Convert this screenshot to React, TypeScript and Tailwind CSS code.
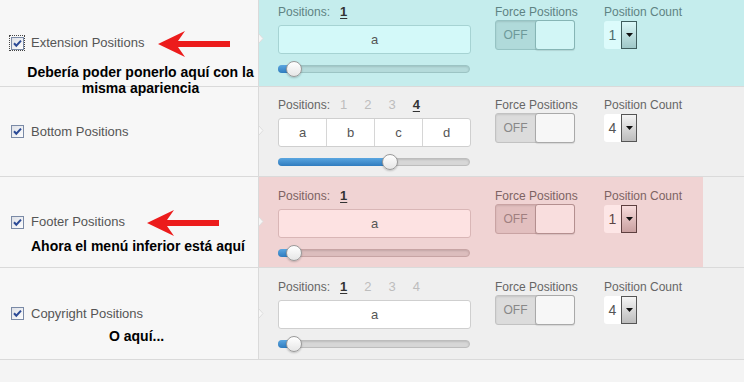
import type { ReactNode } from "react";

type Tone = "teal" | "pink" | "plain";

const tones: Record<
  Tone,
  {
    label: string;
    input: string;
    cell: string;
    track: string;
    off: string;
    knob: string;
    toggle: string;
    num: string;
    btn: string;
  }
> = {
  teal: {
    label: "text-[#5f8383]",
    input: "bg-[#d3f9f9] border-[#a6d3d3]",
    cell: "border-[#a6d3d3]",
    track: "bg-[#b5dbdb] border-[#9cc4c4]",
    off: "bg-[#b0dada] text-[#6d9999]",
    knob: "bg-[#d2f6f6] border-[#86b5b5]",
    toggle: "border-[#96c3c3]",
    num: "bg-[#dcfbfb] text-[#4f6d6d]",
    btn: "border-[#3f5d5d] from-[#dcf8f8] to-[#9fc8c8]",
  },
  pink: {
    label: "text-[#7d6363]",
    input: "bg-[#fde2e2] border-[#d9b6b6]",
    cell: "border-[#d9b6b6]",
    track: "bg-[#dcbdbd] border-[#c7a4a4]",
    off: "bg-[#e2bfbf] text-[#a07f7f]",
    knob: "bg-[#f9dede] border-[#b48f8f]",
    toggle: "border-[#c9a3a3]",
    num: "bg-[#fde6e6] text-[#5d4545]",
    btn: "border-[#5d3f3f] from-[#f8dcdc] to-[#c9a0a0]",
  },
  plain: {
    label: "text-[#666]",
    input: "bg-white border-[#cfcfcf]",
    cell: "border-[#d6d6d6]",
    track: "bg-[#d7d7d7] border-[#bdbdbd]",
    off: "bg-[#dcdcdc] text-[#888]",
    knob: "bg-[#f7f7f7] border-[#a9a9a9]",
    toggle: "border-[#c2c2c2]",
    num: "bg-white text-[#555]",
    btn: "border-[#555] from-[#f5f5f5] to-[#bcbcbc]",
  },
};

const Checkbox = ({ focused }: { focused?: boolean }) => (
  <span className={`flex h-[14px] w-[14px] items-center justify-center ${focused ? "outline-1 outline-dotted outline-[#444]" : ""}`}>
    <svg width="13" height="13" viewBox="0 0 13 13">
      <defs>
        <linearGradient id="cbg" x1="0" y1="0" x2="1" y2="1">
          <stop offset="0" stopColor="#dcdfe6" />
          <stop offset="1" stopColor="#ffffff" />
        </linearGradient>
      </defs>
      <rect x="0.5" y="0.5" width="12" height="12" fill="url(#cbg)" stroke="#7a8aa6" />
      <path d="M3 6.2 L5.3 8.7 L10 3.6" fill="none" stroke="#2b4a96" strokeWidth="2" />
    </svg>
  </span>
);

const Arrow = () => (
  <svg width="72" height="28" viewBox="0 0 72 28">
    <path d="M0 14 L27 1 L20 11 L72 11 L72 17 L20 17 L27 27 Z" fill="#ec1c1c" />
  </svg>
);

const Slider = ({ tone, pos }: { tone: Tone; pos: number }) => {
  const t = tones[tone];
  return (
    <div className="relative mt-[7px] h-[16px] w-[192px]">
      <div className={`absolute left-0 right-0 top-[4px] h-[8px] rounded-full border ${t.track} shadow-[inset_0_1px_2px_rgba(0,0,0,0.12)]`} />
      <div
        className="absolute left-0 top-[4px] h-[8px] rounded-l-full bg-linear-to-b from-[#5aa6e0] to-[#2f7cbf]"
        style={{ width: pos }}
      />
      <div
        className="absolute top-0 h-[16px] w-[16px] rounded-full border border-[#9a9a9a] bg-linear-to-b from-white to-[#e6e6e6] shadow-[0_1px_2px_rgba(0,0,0,0.2)]"
        style={{ left: pos - 8 }}
      />
    </div>
  );
};

interface RowProps {
  tone: Tone;
  label: string;
  focused?: boolean;
  height: string;
  pad: string;
  nums: number[];
  active: number;
  cells: string[];
  pos: number;
  count: string;
  panelWidth: string;
  notch: string;
  note?: ReactNode;
}

const Row = ({ tone, label, focused, height, pad, nums, active, cells, pos, count, panelWidth, notch, note }: RowProps) => {
  const t = tones[tone];
  const panelBg = tone === "teal" ? "bg-[#c5eded]" : tone === "pink" ? "bg-[#f0d3d3]" : "";
  return (
    <div className={`flex ${height} border-b border-[#dadada]`}>
      <div className="relative flex w-[259px] shrink-0 items-center gap-[7px] border-r border-[#dadada] bg-[#f7f7f7] pl-[10px]">
        <Checkbox focused={focused} />
        <span className="text-[13px] text-[#555]">{label}</span>
        {note}
      </div>
      <div className="relative flex flex-1 bg-[#efefef]">
        <svg className={`absolute left-0 ${notch}`} width="5" height="9" viewBox="0 0 5 9">
          <path d="M0 0 L4 4.5 L0 9" fill="#f7f7f7" stroke="#dddddd" />
        </svg>
        <div className={`flex ${panelWidth} gap-6 pl-[19px] ${pad} ${panelBg}`}>
          <div className="flex w-[193px] flex-col">
            <div className={`flex h-[14px] items-center text-[12px] leading-[14px] ${t.label}`}>
              <span>Positions:</span>
              <span className="ml-[10px] flex gap-[17px] text-[13px]">
                {nums.map((n) =>
                  n === active ? (
                    <span key={n} className="font-bold text-[#333] underline underline-offset-2">
                      {n}
                    </span>
                  ) : (
                    <span key={n} className="text-[#bdbdbd]">
                      {n}
                    </span>
                  ),
                )}
              </span>
            </div>
            <div className={`mt-[6px] flex h-[29px] rounded-[3px] border ${t.input}`}>
              {cells.map((c, i) => (
                <div
                  key={c}
                  className={`flex flex-1 items-center justify-center text-[13px] text-[#555] ${i > 0 ? `border-l ${t.cell}` : ""}`}
                >
                  {c}
                </div>
              ))}
            </div>
            <Slider tone={tone} pos={pos} />
          </div>
          <div className="flex w-[85px] flex-col">
            <div className={`h-[14px] text-[12px] leading-[14px] ${t.label}`}>Force Positions</div>
            <div className={`mt-px flex h-[30px] w-[80px] rounded-[3px] border ${t.toggle} ${t.off} shadow-[inset_0_1px_2px_rgba(0,0,0,0.1)]`}>
              <div className="flex w-[39px] items-center justify-center text-[12px]">OFF</div>
              <div className={`-my-px -mr-px flex-1 rounded-[3px] border ${t.knob} shadow-[0_1px_1px_rgba(0,0,0,0.1)]`} />
            </div>
          </div>
          <div className="flex flex-col">
            <div className={`h-[14px] text-[12px] leading-[14px] ${t.label}`}>Position Count</div>
            <div className="mt-[2px] flex h-[28px] w-[33px]">
              <div className={`flex w-[17px] items-center justify-center rounded-l-[3px] text-[14px] ${t.num}`}>{count}</div>
              <div className={`flex flex-1 items-center justify-center border bg-linear-to-b ${t.btn}`}>
                <svg width="7" height="4" viewBox="0 0 7 4">
                  <path d="M0 0 L7 0 L3.5 4 Z" fill="#111" />
                </svg>
              </div>
            </div>
          </div>
        </div>
      </div>
    </div>
  );
};

export default function App() {
  return (
    <div className="h-[382px] w-[744px] overflow-hidden bg-[#f4f4f4] font-['Liberation_Sans',Arial,sans-serif]">
      <Row
        tone="teal"
        label="Extension Positions"
        focused
        height="h-[87px]"
        pad="pt-[5px]"
        nums={[1]}
        active={1}
        cells={["a"]}
        pos={16}
        count="1"
        panelWidth="flex-1"
        notch="top-[34px]"
        note={
          <>
            <div className="absolute left-[158px] top-[30px]">
              <Arrow />
            </div>
            <div className="absolute left-[18px] top-[64px] z-10 w-[245px] text-center text-[14px] font-bold leading-[16px] text-black">
              Debería poder ponerlo aquí con la misma apariencia
            </div>
          </>
        }
      />
      <Row
        tone="plain"
        label="Bottom Positions"
        height="h-[90px]"
        pad="pt-[11px]"
        nums={[1, 2, 3, 4]}
        active={4}
        cells={["a", "b", "c", "d"]}
        pos={112}
        count="4"
        panelWidth="flex-1"
        notch="top-[39px]"
      />
      <Row
        tone="pink"
        label="Footer Positions"
        height="h-[91px]"
        pad="pt-[12px]"
        nums={[1]}
        active={1}
        cells={["a"]}
        pos={16}
        count="1"
        panelWidth="w-[444px]"
        notch="top-[40px]"
        note={
          <>
            <div className="absolute left-[147px] top-[32px]">
              <Arrow />
            </div>
            <div className="absolute left-[31px] top-[61px] z-10 text-[14px] font-bold leading-[16px] text-black">
              Ahora el menú inferior está aquí
            </div>
          </>
        }
      />
      <Row
        tone="plain"
        label="Copyright Positions"
        height="h-[92px]"
        pad="pt-[12px]"
        nums={[1, 2, 3, 4]}
        active={1}
        cells={["a"]}
        pos={16}
        count="4"
        panelWidth="flex-1"
        notch="top-[41px]"
        note={
          <div className="absolute left-[109px] top-[60px] z-10 text-[14px] font-bold leading-[16px] text-black">
            O aquí...
          </div>
        }
      />
    </div>
  );
}
